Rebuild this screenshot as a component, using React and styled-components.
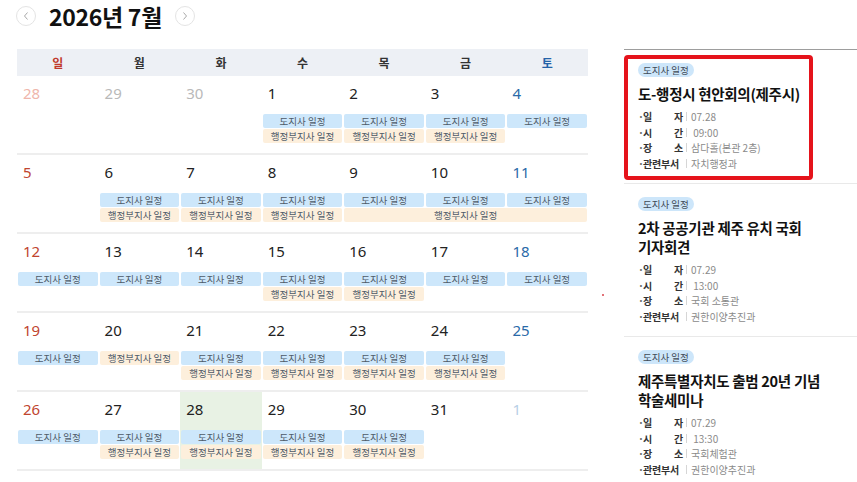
import React from 'react';
import styled, { createGlobalStyle } from 'styled-components';

const Global = createGlobalStyle`
  html, body { margin: 0; padding: 0; background: #fff; }
  body {
    font-family: "Noto Sans CJK KR", "Noto Sans", sans-serif;
    color: #222;
    width: 857px;
    height: 482px;
    overflow: hidden;
  }
`;

const Page = styled.div`
  position: relative;
  display: flex;
  align-items: flex-start;
  width: 857px;
  height: 482px;
`;

const CalendarCol = styled.div`
  flex: none;
  width: 571px;
  margin-left: 17px;
`;

const TitleRow = styled.div`
  display: flex;
  align-items: center;
  gap: 13px;
  height: 32px;
  margin-left: -1px;
  margin-bottom: 17px;
`;

const NavButton = styled.button`
  width: 20px;
  height: 20px;
  padding: 0;
  border: 1px solid #e4e4e4;
  border-radius: 50%;
  background: #fff;
  display: flex;
  align-items: center;
  justify-content: center;
  margin-top: -1px;
`;

const MonthTitle = styled.h1`
  margin: 0;
  font-size: 23px;
  font-weight: 700;
  line-height: 32px;
  color: #111;
  letter-spacing: -0.3px;
`;

const DayHeader = styled.div`
  display: grid;
  grid-template-columns: repeat(7, 1fr);
  height: 27px;
  background: #edf0f5;
  align-items: center;
`;

const dayColor = { sun: '#c0392b', sat: '#2563a8', normal: '#333' };

const DayName = styled.div`
  text-align: center;
  font-size: 12px;
  font-weight: 700;
  color: ${(p) => dayColor[p.$tone]};
`;

const Week = styled.div`
  display: grid;
  grid-template-columns: repeat(7, 1fr);
  grid-template-rows: 38px 15px 15px 1fr;
  height: 77px;
  border-bottom: 2px solid #eeeeee;
`;

const TodayFill = styled.div`
  grid-column: ${(p) => p.$col};
  grid-row: 1 / -1;
  background: #e8f2e4;
`;

const dateColor = {
  normal: '#222',
  sun: '#c0452f',
  sat: '#2a6aa8',
  prevSun: '#efb6ab',
  prev: '#b9b9b9',
  nextSat: '#b7cfe6',
};

const DateNum = styled.div`
  grid-column: ${(p) => p.$col};
  grid-row: 1;
  padding: 8px 0 0 6px;
  font-family: "Noto Sans", "Noto Sans CJK KR", sans-serif;
  font-size: 15px;
  line-height: 18px;
  color: ${(p) => dateColor[p.$tone]};
`;

const Bar = styled.div`
  grid-column: ${(p) => p.$col} / span ${(p) => p.$span || 1};
  grid-row: ${(p) => p.$slot + 1};
  height: 14px;
  margin: 0 1px;
  border-radius: 2px;
  background: ${(p) => (p.$kind === 'gov' ? '#cde7fb' : '#fdefdc')};
  color: #4e5a68;
  font-size: 9.5px;
  line-height: 14px;
  text-align: center;
  white-space: nowrap;
  overflow: hidden;
`;

const Side = styled.aside`
  flex: none;
  width: 233px;
  margin-left: 36px;
  margin-top: 49px;
  border-top: 1px solid #9d9d9d;
`;

const Item = styled.article`
  position: relative;
  padding: 13px 14px 12px;
  border-bottom: 1px solid #e9e9e9;
`;

const Highlight = styled.div`
  position: absolute;
  left: 0;
  top: 5px;
  width: 189px;
  height: 125px;
  box-sizing: border-box;
  border: 4px solid #e5131b;
  border-radius: 4px;
  pointer-events: none;
`;

const Badge = styled.span`
  display: block;
  width: fit-content;
  height: 14px;
  padding: 0 5px;
  border-radius: 7px;
  background: #cde6fa;
  color: #3f4a56;
  font-size: 9.5px;
  line-height: 14px;
`;

const ItemTitle = styled.h2`
  margin: 7px 0 0;
  font-size: 14.5px;
  font-weight: 700;
  line-height: 19px;
  letter-spacing: -0.3px;
  color: #111;
  word-break: keep-all;
`;

const Details = styled.ul`
  list-style: none;
  margin: 6px 0 0;
  padding: 0;
`;

const DetailRow = styled.li`
  display: flex;
  align-items: center;
  height: 15.5px;
  font-size: 10px;
  line-height: 15.5px;
`;

const Bullet = styled.span`
  width: 5px;
  color: #666;
  font-weight: 700;
`;

const Label = styled.span`
  width: 40px;
  color: #333;
  font-weight: 600;
  letter-spacing: -0.2px;
  text-align: justify;
  text-align-last: justify;
`;

const Sep = styled.span`
  margin: 0 4px 0 3px;
  width: 1px;
  height: 9px;
  background: #d6d6d6;
`;

const Value = styled.span`
  color: #8a8a8a;
  white-space: pre;
`;

const Dot = styled.span`
  position: absolute;
  left: 602px;
  top: 294px;
  width: 2px;
  height: 2px;
  border-radius: 1px;
  background: #d8434b;
`;

const Chevron = ({ dir }) => (
  <svg width="8" height="10" viewBox="0 0 8 10" aria-hidden="true">
    <path
      d={dir === 'left' ? 'M5.5 1.5 L2.5 5 L5.5 8.5' : 'M2.5 1.5 L5.5 5 L2.5 8.5'}
      fill="none"
      stroke="#a9a9a9"
      strokeWidth="1"
    />
  </svg>
);

const days = [
  { n: '일', t: 'sun' },
  { n: '월', t: 'normal' },
  { n: '화', t: 'normal' },
  { n: '수', t: 'normal' },
  { n: '목', t: 'normal' },
  { n: '금', t: 'normal' },
  { n: '토', t: 'sat' },
];

const GOV = '도지사 일정';
const VICE = '행정부지사 일정';

const weeks = [
  {
    dates: [
      ['28', 'prevSun'], ['29', 'prev'], ['30', 'prev'], ['1', 'normal'],
      ['2', 'normal'], ['3', 'normal'], ['4', 'sat'],
    ],
    events: [
      [4, 1, 1, 'gov'], [5, 1, 1, 'gov'], [6, 1, 1, 'gov'], [7, 1, 1, 'gov'],
      [4, 1, 2, 'vice'], [5, 1, 2, 'vice'], [6, 1, 2, 'vice'],
    ],
  },
  {
    dates: [
      ['5', 'sun'], ['6', 'normal'], ['7', 'normal'], ['8', 'normal'],
      ['9', 'normal'], ['10', 'normal'], ['11', 'sat'],
    ],
    events: [
      [2, 1, 1, 'gov'], [3, 1, 1, 'gov'], [4, 1, 1, 'gov'], [5, 1, 1, 'gov'],
      [6, 1, 1, 'gov'], [7, 1, 1, 'gov'],
      [2, 1, 2, 'vice'], [3, 1, 2, 'vice'], [4, 1, 2, 'vice'], [5, 3, 2, 'vice'],
    ],
  },
  {
    dates: [
      ['12', 'sun'], ['13', 'normal'], ['14', 'normal'], ['15', 'normal'],
      ['16', 'normal'], ['17', 'normal'], ['18', 'sat'],
    ],
    events: [
      [1, 1, 1, 'gov'], [2, 1, 1, 'gov'], [3, 1, 1, 'gov'], [4, 1, 1, 'gov'],
      [5, 1, 1, 'gov'], [6, 1, 1, 'gov'], [7, 1, 1, 'gov'],
      [4, 1, 2, 'vice'], [5, 1, 2, 'vice'],
    ],
  },
  {
    dates: [
      ['19', 'sun'], ['20', 'normal'], ['21', 'normal'], ['22', 'normal'],
      ['23', 'normal'], ['24', 'normal'], ['25', 'sat'],
    ],
    events: [
      [1, 1, 1, 'gov'], [2, 1, 1, 'vice'], [3, 1, 1, 'gov'], [4, 1, 1, 'gov'],
      [5, 1, 1, 'gov'], [6, 1, 1, 'gov'],
      [3, 1, 2, 'vice'], [4, 1, 2, 'vice'], [5, 1, 2, 'vice'], [6, 1, 2, 'vice'],
    ],
  },
  {
    today: 3,
    dates: [
      ['26', 'sun'], ['27', 'normal'], ['28', 'normal'], ['29', 'normal'],
      ['30', 'normal'], ['31', 'normal'], ['1', 'nextSat'],
    ],
    events: [
      [1, 1, 1, 'gov'], [2, 1, 1, 'gov'], [3, 1, 1, 'gov'], [4, 1, 1, 'gov'],
      [5, 1, 1, 'gov'],
      [2, 1, 2, 'vice'], [3, 1, 2, 'vice'], [4, 1, 2, 'vice'], [5, 1, 2, 'vice'],
    ],
  },
];

const schedule = [
  {
    title: '도-행정시 현안회의(제주시)',
    date: '07.28',
    time: ' 09:00',
    place: '삼다홀(본관 2층)',
    dept: '자치행정과',
    highlight: true,
  },
  {
    title: '2차 공공기관 제주 유치 국회 기자회견',
    date: '07.29',
    time: ' 13:00',
    place: '국회 소통관',
    dept: '권한이양추진과',
  },
  {
    title: '제주특별자치도 출범 20년 기념 학술세미나',
    date: '07.29',
    time: ' 13:30',
    place: '국회체험관',
    dept: '권한이양추진과',
  },
];

const Detail = ({ label, value }) => (
  <DetailRow>
    <Bullet>·</Bullet>
    <Label>{label}</Label>
    <Sep />
    <Value>{value}</Value>
  </DetailRow>
);

export default function App() {
  return (
    <>
      <Global />
      <Page>
        <CalendarCol>
          <TitleRow>
            <NavButton aria-label="이전 달">
              <Chevron dir="left" />
            </NavButton>
            <MonthTitle>2026년 7월</MonthTitle>
            <NavButton aria-label="다음 달">
              <Chevron dir="right" />
            </NavButton>
          </TitleRow>
          <DayHeader>
            {days.map((d) => (
              <DayName key={d.n} $tone={d.t}>
                {d.n}
              </DayName>
            ))}
          </DayHeader>
          {weeks.map((w, wi) => (
            <Week key={wi}>
              {w.today && <TodayFill $col={w.today} />}
              {w.dates.map(([n, tone], i) => (
                <DateNum key={i} $col={i + 1} $tone={tone}>
                  {n}
                </DateNum>
              ))}
              {w.events.map(([col, span, slot, kind], i) => (
                <Bar key={`e${i}`} $col={col} $span={span} $slot={slot} $kind={kind}>
                  {kind === 'gov' ? GOV : VICE}
                </Bar>
              ))}
            </Week>
          ))}
        </CalendarCol>
        <Side>
          {schedule.map((s, i) => (
            <Item key={i}>
              {s.highlight && <Highlight />}
              <Badge>도지사 일정</Badge>
              <ItemTitle>{s.title}</ItemTitle>
              <Details>
                <Detail label="일 자" value={s.date} />
                <Detail label="시 간" value={s.time} />
                <Detail label="장 소" value={s.place} />
                <Detail label="관련부서" value={s.dept} />
              </Details>
            </Item>
          ))}
        </Side>
        <Dot />
      </Page>
    </>
  );
}
